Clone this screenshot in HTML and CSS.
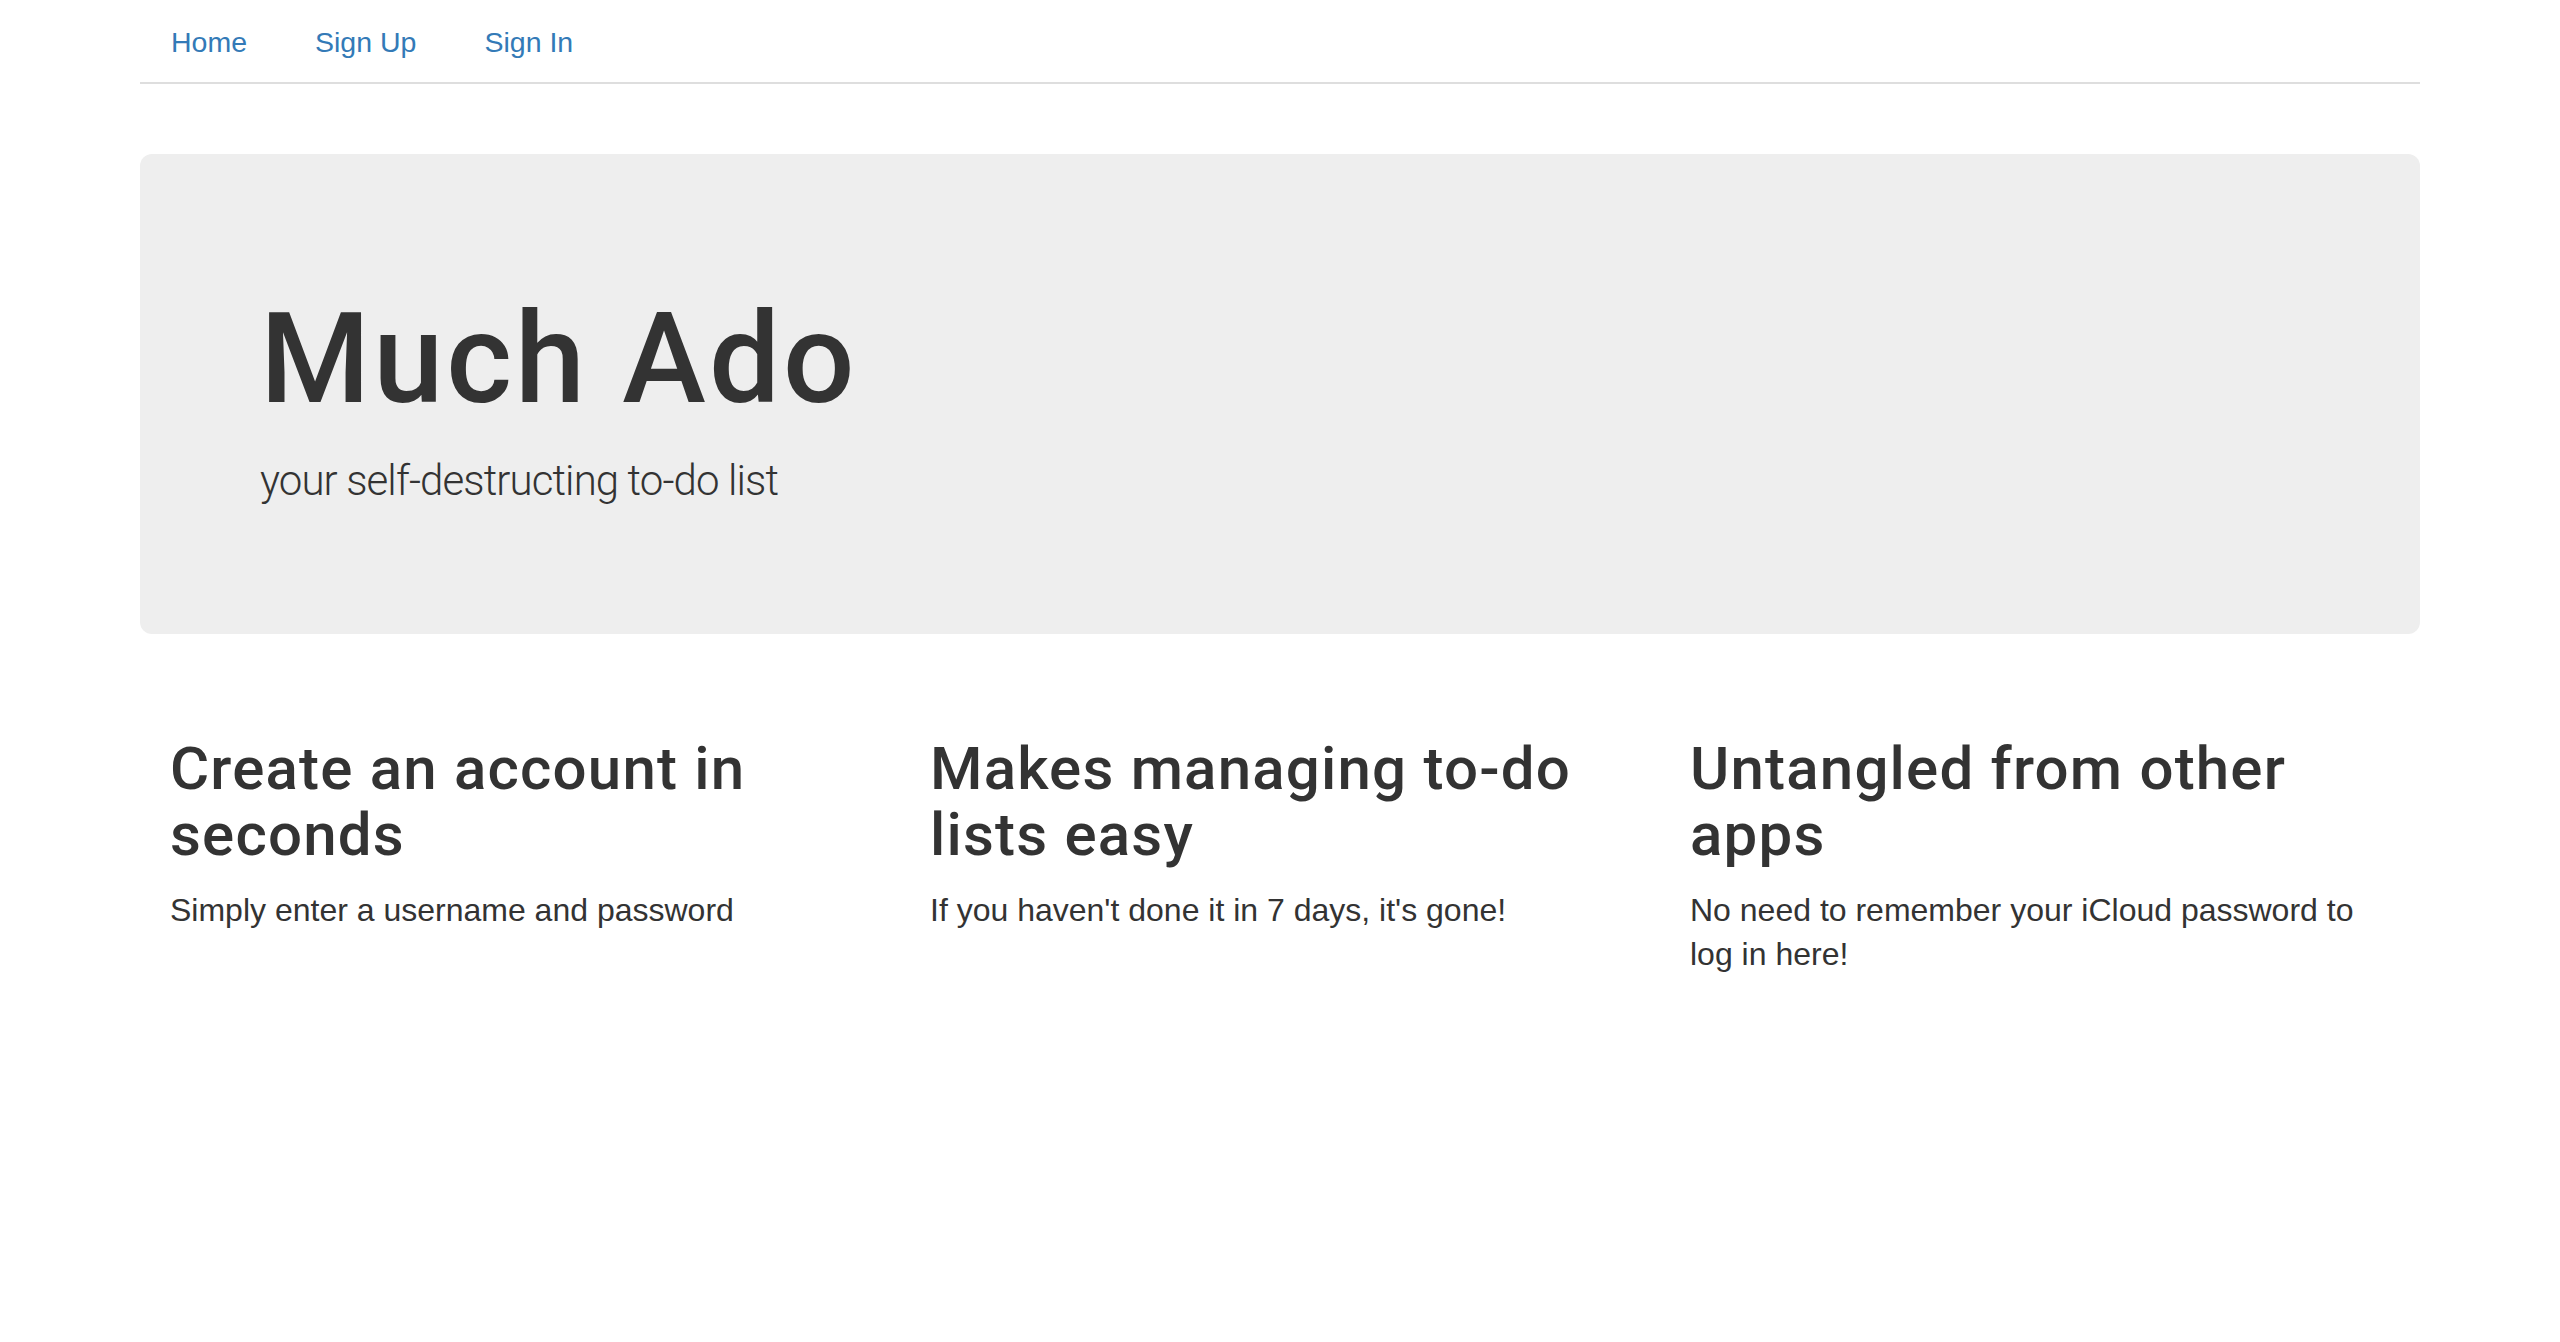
FILE: index.html
```html
<!DOCTYPE html>
<html lang="en">
<head>
<meta charset="utf-8">
<title>Much Ado</title>
<link rel="stylesheet" href="styles.css">
</head>
<body>
<div class="container">
  <header class="header">
    <ul class="nav">
      <li><a href="#">Home</a></li>
      <li><a href="#">Sign Up</a></li>
      <li><a href="#">Sign In</a></li>
    </ul>
  </header>

  <section class="jumbotron">
    <h1>Much Ado</h1>
    <p class="lead">your self-destructing to-do list</p>
  </section>

  <section class="features">
    <div class="feature">
      <h2>Create an account in seconds</h2>
      <p>Simply enter a username and password</p>
    </div>
    <div class="feature">
      <h2>Makes managing to-do lists easy</h2>
      <p>If you haven't done it in 7 days, it's gone!</p>
    </div>
    <div class="feature">
      <h2>Untangled from other apps</h2>
      <p>No need to remember your iCloud password to log in here!</p>
    </div>
  </section>
</div>
</body>
</html>
```

FILE: styles.css
```css
* { box-sizing: border-box; }

html, body {
  margin: 0;
  padding: 0;
  background: #fff;
}

body {
  font-family: "Liberation Sans", Arial, sans-serif;
  font-size: 32px;
  line-height: 44px;
  color: #333;
}

.container {
  width: 2280px;
  margin: 0 auto;
}

.header {
  border-bottom: 2px solid #dedede;
  margin-bottom: 70px;
}

.nav {
  list-style: none;
  margin: 0;
  padding: 0;
  display: flex;
}

.nav li + li { margin-left: 6px; }

.nav a {
  display: block;
  padding: 22px 31px 20px;
  font-size: 28.5px;
  line-height: 40px;
  color: #337ab7;
  text-decoration: none;
}

.jumbotron {
  background: #eeeeee;
  border-radius: 12px;
  padding: 96px 120px;
  margin-bottom: 60px;
}

.jumbotron h1 {
  font-family: Roboto, "Liberation Sans", sans-serif;
  font-weight: 500;
  font-size: 126px;
  line-height: 138px;
  letter-spacing: 3px;
  margin: 40px 0 23px;
  color: #333;
}

.lead {
  font-family: Roboto, "Liberation Sans", sans-serif;
  font-weight: 300;
  font-size: 42px;
  line-height: 60px;
  letter-spacing: -0.9px;
  margin: 0 0 27px;
  color: #333;
}

.features {
  display: grid;
  grid-template-columns: repeat(3, 1fr);
}

.feature {
  padding: 0 30px;
}

.feature h2 {
  font-family: Roboto, "Liberation Sans", sans-serif;
  font-weight: 500;
  font-size: 60px;
  line-height: 66px;
  letter-spacing: 1.2px;
  margin: 42px 0 20px;
  color: #333;
}

.feature p {
  margin: 0;
}
```
